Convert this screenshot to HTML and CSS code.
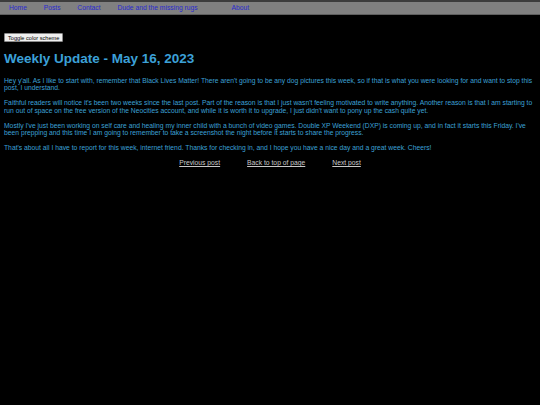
FILE: index.html
```html
<!DOCTYPE html>
<html lang="en">
<head>
<meta charset="utf-8">
<title>Weekly Update - May 16, 2023</title>
<link rel="stylesheet" href="styles.css">
</head>
<body>
<nav class="topnav">
  <a class="navlink" href="#">Home</a>
  <a class="navlink" href="#">Posts</a>
  <a class="navlink" href="#">Contact</a>
  <a class="navlink" href="#">Dude and the missing rugs</a>
  <a class="navlink navlink-far" href="#">About</a>
</nav>
<main class="content">
  <button class="toggle" type="button">Toggle color scheme</button>
  <h1 class="title">Weekly Update - May 16, 2023</h1>
  <p class="para">Hey y'all. As I like to start with, remember that Black Lives Matter! There aren't going to be any dog pictures this week, so if that is what you were looking for and want to stop this post, I understand.</p>
  <p class="para">Faithful readers will notice it's been two weeks since the last post. Part of the reason is that I just wasn't feeling motivated to write anything. Another reason is that I am starting to run out of space on the free version of the Neocities account, and while it is worth it to upgrade, I just didn't want to pony up the cash quite yet.</p>
  <p class="para">Mostly I've just been working on self care and healing my inner child with a bunch of video games. Double XP Weekend (DXP) is coming up, and in fact it starts this Friday. I've been prepping and this time I am going to remember to take a screenshot the night before it starts to share the progress.</p>
  <p class="para">That's about all I have to report for this week, internet friend. Thanks for checking in, and I hope you have a nice day and a great week. Cheers!</p>
  <div class="postnav">
    <a class="postlink" href="#">Previous post</a>
    <a class="postlink" href="#">Back to top of page</a>
    <a class="postlink" href="#">Next post</a>
  </div>
</main>
</body>
</html>
```
FILE: styles.css
```css
html, body {
  background: #000;
}
body {
  margin: 0;
  font-family: "Liberation Sans", Arial, sans-serif;
  font-size: 6.75px;
  line-height: 7.8px;
  color: #3ca0d6;
}
.topnav {
  display: flex;
  background: #808080;
  border-top: 2px solid #3c3c3c;
  border-bottom: 1px solid #5e5e5e;
  padding: 2px 0 2px 0.5px;
  height: 8px;
  align-items: center;
}
.navlink {
  color: #2a2ad0;
  text-decoration: none;
  padding: 0 8.4px;
}
.navlink-far {
  margin-left: 17px;
}
.content {
  padding: 0 4px;
}
.toggle {
  display: block;
  margin: 18px 0 0 0;
  font-family: "Liberation Sans", Arial, sans-serif;
  font-size: 5.6px;
  line-height: 6px;
  padding: 0 3px;
  height: 9px;
  background: #efefef;
  color: #000;
  border: 1px solid #8a8a8a;
  border-radius: 1px;
}
.title {
  font-size: 13.5px;
  line-height: 15.5px;
  margin: 9px 0 10px 0;
  color: #3ca0d8;
}
.para {
  margin: 7px 0;
}
.postnav {
  display: flex;
  justify-content: center;
  gap: 27px;
  margin-top: 6px;
}
.postlink {
  color: #c8c8c8;
  text-decoration: underline;
  text-decoration-thickness: 1px;
  text-underline-offset: 1px;
}
```
